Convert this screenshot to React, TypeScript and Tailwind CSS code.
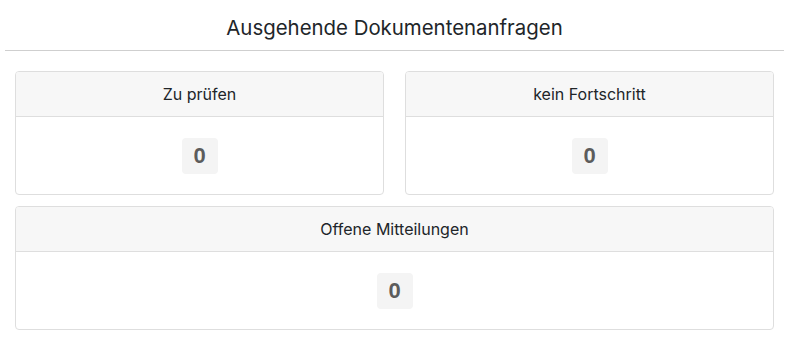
export default function App() {
  return (
    <div className="w-[789px] bg-white font-['Inter','Noto_Sans',sans-serif] text-[#212529]">
      <h1 className="h-[50px] pt-[7px] flex items-center justify-center text-[20.4px] font-normal">
        Ausgehende Dokumentenanfragen
      </h1>
      <div className="mx-[5px] border-b border-[#cfcfcf]" />
      <div className="px-[15px] pt-[20px] grid grid-cols-2 gap-x-[21px] gap-y-[11px]">
        <Card title="Zu prüfen" count={0} />
        <Card title="kein Fortschritt" count={0} />
        <Card title="Offene Mitteilungen" count={0} wide />
      </div>
    </div>
  )
}

function Card({ title, count, wide = false }: { title: string; count: number; wide?: boolean }) {
  return (
    <div className={`${wide ? 'col-span-2' : ''} border border-[#dedede] rounded-[4px] overflow-hidden`}>
      <div className="h-[45px] flex items-center justify-center bg-[#f7f7f7] border-b border-[#dedede] text-[16px]">
        {title}
      </div>
      <div className="h-[77px] flex items-center justify-center">
        <span className="w-[36px] h-[36px] flex items-center justify-center rounded-[4px] bg-[#f4f4f4] text-[22px] font-bold text-[#5c5c5c] font-['Liberation_Sans',sans-serif]">
          {count}
        </span>
      </div>
    </div>
  )
}
